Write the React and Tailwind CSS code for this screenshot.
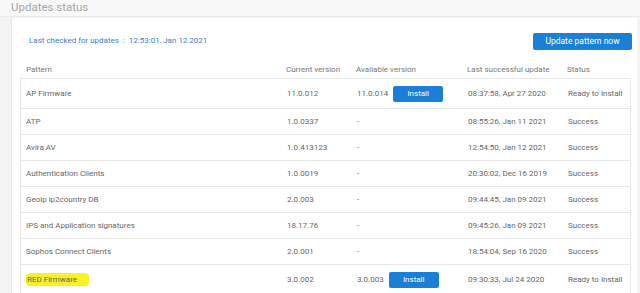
export default function App() {
  const rows = [
    { name: "AP Firmware", cur: "11.0.012", avail: "11.0.014", install: true, last: "08:37:58, Apr 27 2020", status: "Ready to Install" },
    { name: "ATP", cur: "1.0.0337", avail: "-", last: "08:55:26, Jan 11 2021", status: "Success" },
    { name: "Avira AV", cur: "1.0.413123", avail: "-", last: "12:54:50, Jan 12 2021", status: "Success" },
    { name: "Authentication Clients", cur: "1.0.0019", avail: "-", last: "20:30:02, Dec 16 2019", status: "Success" },
    { name: "Geoip ip2country DB", cur: "2.0.003", avail: "-", last: "09:44:45, Jan 09 2021", status: "Success" },
    { name: "IPS and Application signatures", cur: "18.17.76", avail: "-", last: "09:45:26, Jan 09 2021", status: "Success" },
    { name: "Sophos Connect Clients", cur: "2.0.001", avail: "-", last: "18:54:04, Sep 16 2020", status: "Success" },
    { name: "RED Firmware", cur: "3.0.002", avail: "3.0.003", install: true, last: "09:30:33, Jul 24 2020", status: "Ready to Install", hl: true },
  ];
  const cols = "grid grid-cols-[260px_70px_111px_100px_1fr]";
  return (
    <div className="w-[640px] h-[293px] overflow-hidden bg-[#f3f3f3] font-['Roboto',sans-serif] text-[8px] text-[#666]">
      <div className="h-[17px] bg-[#f8f8f8] border-b border-[#ebebeb] pl-[11px] text-[11.5px] leading-[15px] text-[#a5a5a5]">
        Updates status
      </div>
      <div className="ml-[11px] mr-[3px] mt-[1px] h-[300px] bg-white border-l border-[#e8e8e8] pt-[14px]">
        <div className="flex items-center justify-between pl-[17px] pr-[5px] h-[18px]">
          <div className="text-[#3b80c6] text-[8px]">
            Last checked for updates&nbsp; :&nbsp; 12:53:01, Jan 12 2021
          </div>
          <div className="w-[99px] h-[17px] bg-[#1b7fd5] rounded-[2px] text-white text-[8.5px] flex items-center justify-center">
            Update pattern now
          </div>
        </div>
        <div className="ml-[8px] mr-[6px] mt-[12px]">
          <div className={`${cols} h-[17px] items-center text-[#777] border-b border-[#e6e6e6]`}>
            <div className="pl-[6px]">Pattern</div>
            <div className="pl-[6px]">Current version</div>
            <div className="pl-[6px]">Available version</div>
            <div className="pl-[6px]">Last successful update</div>
            <div className="pl-[6px]">Status</div>
          </div>
          <div className="border-l border-r border-[#e6e6e6]">
            {rows.map((r) => (
              <div key={r.name} className={`${cols} ${r.install ? "h-[30px]" : "h-[26px]"} items-center border-b border-[#e6e6e6]`}>
                <div className="pl-[5px]">
                  {r.hl ? (
                    <span className="bg-[#f6f224] rounded-[4px] pl-[1px] pr-[12px] py-[2px]">{r.name}</span>
                  ) : (
                    r.name
                  )}
                </div>
                <div className="pl-[6px]">{r.cur}</div>
                <div className="pl-[6px] flex items-center">
                  <span>{r.avail}</span>
                  {r.install && (
                    <span className="ml-[5px] w-[50px] h-[16px] bg-[#1b7fd5] rounded-[2px] text-white flex items-center justify-center">
                      Install
                    </span>
                  )}
                </div>
                <div className="pl-[6px]">{r.last}</div>
                <div className="pl-[6px]">{r.status}</div>
              </div>
            ))}
          </div>
        </div>
      </div>
    </div>
  );
}
